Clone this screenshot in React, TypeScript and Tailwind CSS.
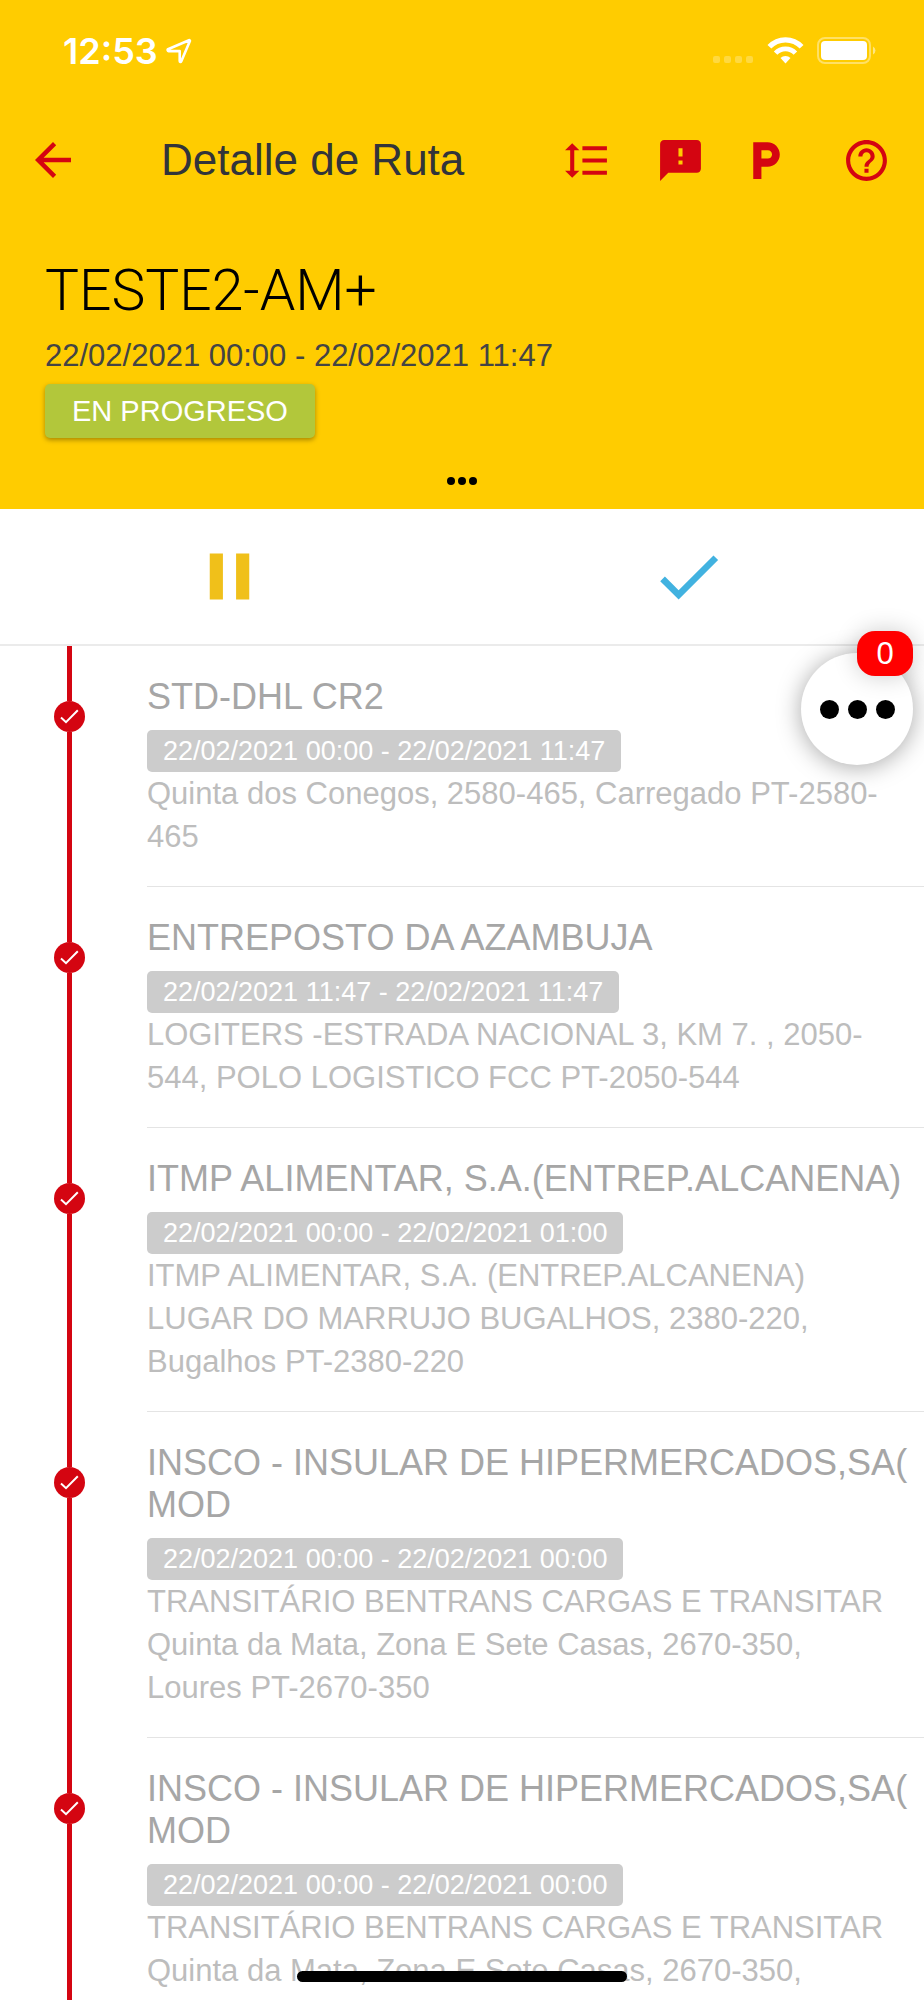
import React from 'react';
import {
  MdArrowBack,
  MdCheck,
  MdFeedback,
  MdFormatLineSpacing,
  MdHelpOutline,
  MdLocalParking,
  MdPause,
} from 'react-icons/md';

interface Stop {
  id: number;
  name: string;
  window: string;
  address: string[];
}

const stops: Stop[] = [
  {
    id: 1,
    name: 'STD-DHL CR2',
    window: '22/02/2021 00:00 - 22/02/2021 11:47',
    address: ['Quinta dos Conegos, 2580-465, Carregado PT-2580-', '465'],
  },
  {
    id: 2,
    name: 'ENTREPOSTO DA AZAMBUJA',
    window: '22/02/2021 11:47 - 22/02/2021 11:47',
    address: ['LOGITERS -ESTRADA NACIONAL 3, KM 7. , 2050-', '544, POLO LOGISTICO FCC PT-2050-544'],
  },
  {
    id: 3,
    name: 'ITMP ALIMENTAR, S.A.(ENTREP.ALCANENA)',
    window: '22/02/2021 00:00 - 22/02/2021 01:00',
    address: [
      'ITMP ALIMENTAR, S.A. (ENTREP.ALCANENA)',
      'LUGAR DO MARRUJO BUGALHOS, 2380-220,',
      'Bugalhos PT-2380-220',
    ],
  },
  {
    id: 4,
    name: 'INSCO - INSULAR DE HIPERMERCADOS,SA( MOD',
    window: '22/02/2021 00:00 - 22/02/2021 00:00',
    address: [
      'TRANSITÁRIO BENTRANS CARGAS E TRANSITAR',
      'Quinta da Mata, Zona E Sete Casas, 2670-350,',
      'Loures PT-2670-350',
    ],
  },
  {
    id: 5,
    name: 'INSCO - INSULAR DE HIPERMERCADOS,SA( MOD',
    window: '22/02/2021 00:00 - 22/02/2021 00:00',
    address: [
      'TRANSITÁRIO BENTRANS CARGAS E TRANSITAR',
      'Quinta da Mata, Zona E Sete Casas, 2670-350,',
      'Loures PT-2670-350',
    ],
  },
];

const StatusBar: React.FC = () => (
  <div className="flex h-[102px] items-center justify-between pl-[63px] pr-12 text-white">
    <div className="flex items-center gap-2">
      <span className="font-['Inter',sans-serif] text-[36px] font-semibold leading-[42px]">12:53</span>
      <svg width="26" height="26" viewBox="0 0 26 26" fill="none" aria-hidden="true">
        <path
          d="M2 11.2 23 2.2a.7.7 0 0 1 .9.9L15.2 23.4c-.4.8-1.5.6-1.5-.3v-10H2.600c-.9 0-1.300-1.500-.6-1.900z"
          stroke="currentColor"
          strokeWidth="2.6"
          strokeLinejoin="round"
        />
      </svg>
    </div>
    <svg width="164" height="28" viewBox="0 0 164 28" aria-hidden="true">
      <g fill="#fff" fillOpacity=".25">
        <rect x="1" y="19" width="7" height="7" rx="2" />
        <rect x="12" y="19" width="7" height="7" rx="2" />
        <rect x="23" y="19" width="7" height="7" rx="2" />
        <rect x="34" y="19" width="7" height="7" rx="2" />
      </g>
      <g fill="none" stroke="#fff">
        <path d="M57.400 9.800a22 22 0 0 1 32.200 0" strokeWidth="5.200" />
        <path d="M63.600 16.200a13.500 13.500 0 0 1 19.800 0" strokeWidth="4.800" />
      </g>
      <path d="M68.500 21a7 7 0 0 1 10 0l-5 5.500z" fill="#fff" />
      <rect x="106" y="1" width="52" height="25" rx="7" fill="none" stroke="#fff" strokeOpacity=".4" strokeWidth="2" />
      <rect x="109" y="4" width="46" height="19" rx="4" fill="#fff" />
      <path d="M161 9.500v8a4.500 4.500 0 0 0 0-8z" fill="#fff" fillOpacity=".5" />
    </svg>
  </div>
);

const Toolbar: React.FC = () => (
  <div className="flex h-[116px] items-center pl-[26px] pr-[33px] text-[#d40511]">
    <button type="button" aria-label="Volver">
      <MdArrowBack size={54} />
    </button>
    <h1 className="ml-[81px] flex-1 text-[44px] leading-[50px] text-[#32343a]">Detalle de Ruta</h1>
    <div className="flex items-center">
      <button type="button" aria-label="Ordenar paradas" className="mr-[45px]">
        <MdFormatLineSpacing size={49} />
      </button>
      <button type="button" aria-label="Incidencias" className="mr-9">
        <MdFeedback size={49} />
      </button>
      <button type="button" aria-label="Estacionamiento" className="mr-[52px]">
        <MdLocalParking size={49} />
      </button>
      <button type="button" aria-label="Ayuda">
        <MdHelpOutline size={49} />
      </button>
    </div>
  </div>
);

const RouteSummary: React.FC = () => (
  <section className="flex flex-col items-start px-[45px] pb-6 pt-[42px]">
    <h2 className="font-['Roboto','Liberation_Sans',sans-serif] text-[57px] font-light leading-[62px] text-black">
      TESTE2-AM+
    </h2>
    <p className="mt-4 text-[31px] leading-[36px] text-[#444]">22/02/2021 00:00 - 22/02/2021 11:47</p>
    <span className="mt-2.5 rounded-[5px] bg-[#b2c73b] px-[27px] text-[29px] leading-[54px] text-white shadow-[0_2px_5px_rgba(0,0,0,0.35)]">
      EN PROGRESO
    </span>
    <button type="button" aria-label="Más detalles" className="mt-[39px] flex gap-[3px] self-center">
      <span className="size-2 rounded-full bg-black" />
      <span className="size-2 rounded-full bg-black" />
      <span className="size-2 rounded-full bg-black" />
    </button>
  </section>
);

const RouteActions: React.FC = () => (
  <div className="grid shrink-0 grid-cols-2 border-b-2 border-[#ebebeb] bg-white pr-1.5">
    <button type="button" aria-label="Pausar" className="flex h-[135px] items-center justify-center text-[#f0c01a]">
      <MdPause size={79} />
    </button>
    <button type="button" aria-label="Finalizar" className="flex h-[135px] items-center justify-center text-[#41b2e0]">
      <MdCheck size={79} />
    </button>
  </div>
);

const StopItem: React.FC<{ stop: Stop }> = ({ stop }) => (
  <li className="flex">
    <div className="flex w-[139px] shrink-0 flex-col items-center">
      <span className="h-[55px] w-[5px] bg-[#d40511]" />
      <span className="flex size-[31px] items-center justify-center rounded-full bg-[#d40511]">
        <svg width="19" height="15" viewBox="0 0 19 15" fill="none" aria-hidden="true">
          <path d="M1 8.500 6 13.200 17.800 1.200" stroke="#fff" strokeWidth="2" />
        </svg>
      </span>
      <span className="w-[5px] flex-1 bg-[#d40511]" />
    </div>
    <div className="ml-2 flex min-w-0 flex-1 flex-col items-start border-b border-[#e4e4e4] pb-7 pt-[30px]">
      <h3 className="pr-4 text-[36px] leading-[42px] text-[#a6a6a6]">{stop.name}</h3>
      <span className="mt-3 rounded-[5px] bg-[#ccc] px-4 text-[27px] leading-[42px] text-white">{stop.window}</span>
      <p className="text-[31px] leading-[43px] text-[#bdbdbd]">
        {stop.address.map((line) => (
          <span key={line} className="block">
            {line}
          </span>
        ))}
      </p>
    </div>
  </li>
);

// Floating menu with the pending messages counter
const FloatingMenu: React.FC = () => (
  <button
    type="button"
    aria-label="Menú"
    className="absolute right-[11px] top-[653px] flex size-28 items-center justify-center gap-[9px] rounded-full bg-white shadow-[0_2px_24px_rgba(0,0,0,0.35)]"
  >
    <span className="size-[19px] rounded-full bg-black" />
    <span className="size-[19px] rounded-full bg-black" />
    <span className="size-[19px] rounded-full bg-black" />
    <span className="absolute -top-[22px] right-0 w-14 rounded-[18px] bg-[#f00] text-center text-[31px] leading-[45px] text-white shadow-[0_0_24px_rgba(0,0,0,0.2)]">
      0
    </span>
  </button>
);

export default function App() {
  return (
    <div className="relative flex h-screen flex-col overflow-hidden bg-white font-['Liberation_Sans',Arial,sans-serif]">
      <header className="shrink-0 bg-[#fc0]">
        <StatusBar />
        <Toolbar />
        <RouteSummary />
      </header>
      <RouteActions />
      <main className="min-h-0 flex-1 overflow-hidden">
        <ul>
          {stops.map((stop) => (
            <StopItem key={stop.id} stop={stop} />
          ))}
        </ul>
      </main>
      <FloatingMenu />
      <div className="absolute bottom-[18px] left-1/2 h-[11px] w-[330px] -translate-x-1/2 rounded-full bg-black" />
    </div>
  );
}
